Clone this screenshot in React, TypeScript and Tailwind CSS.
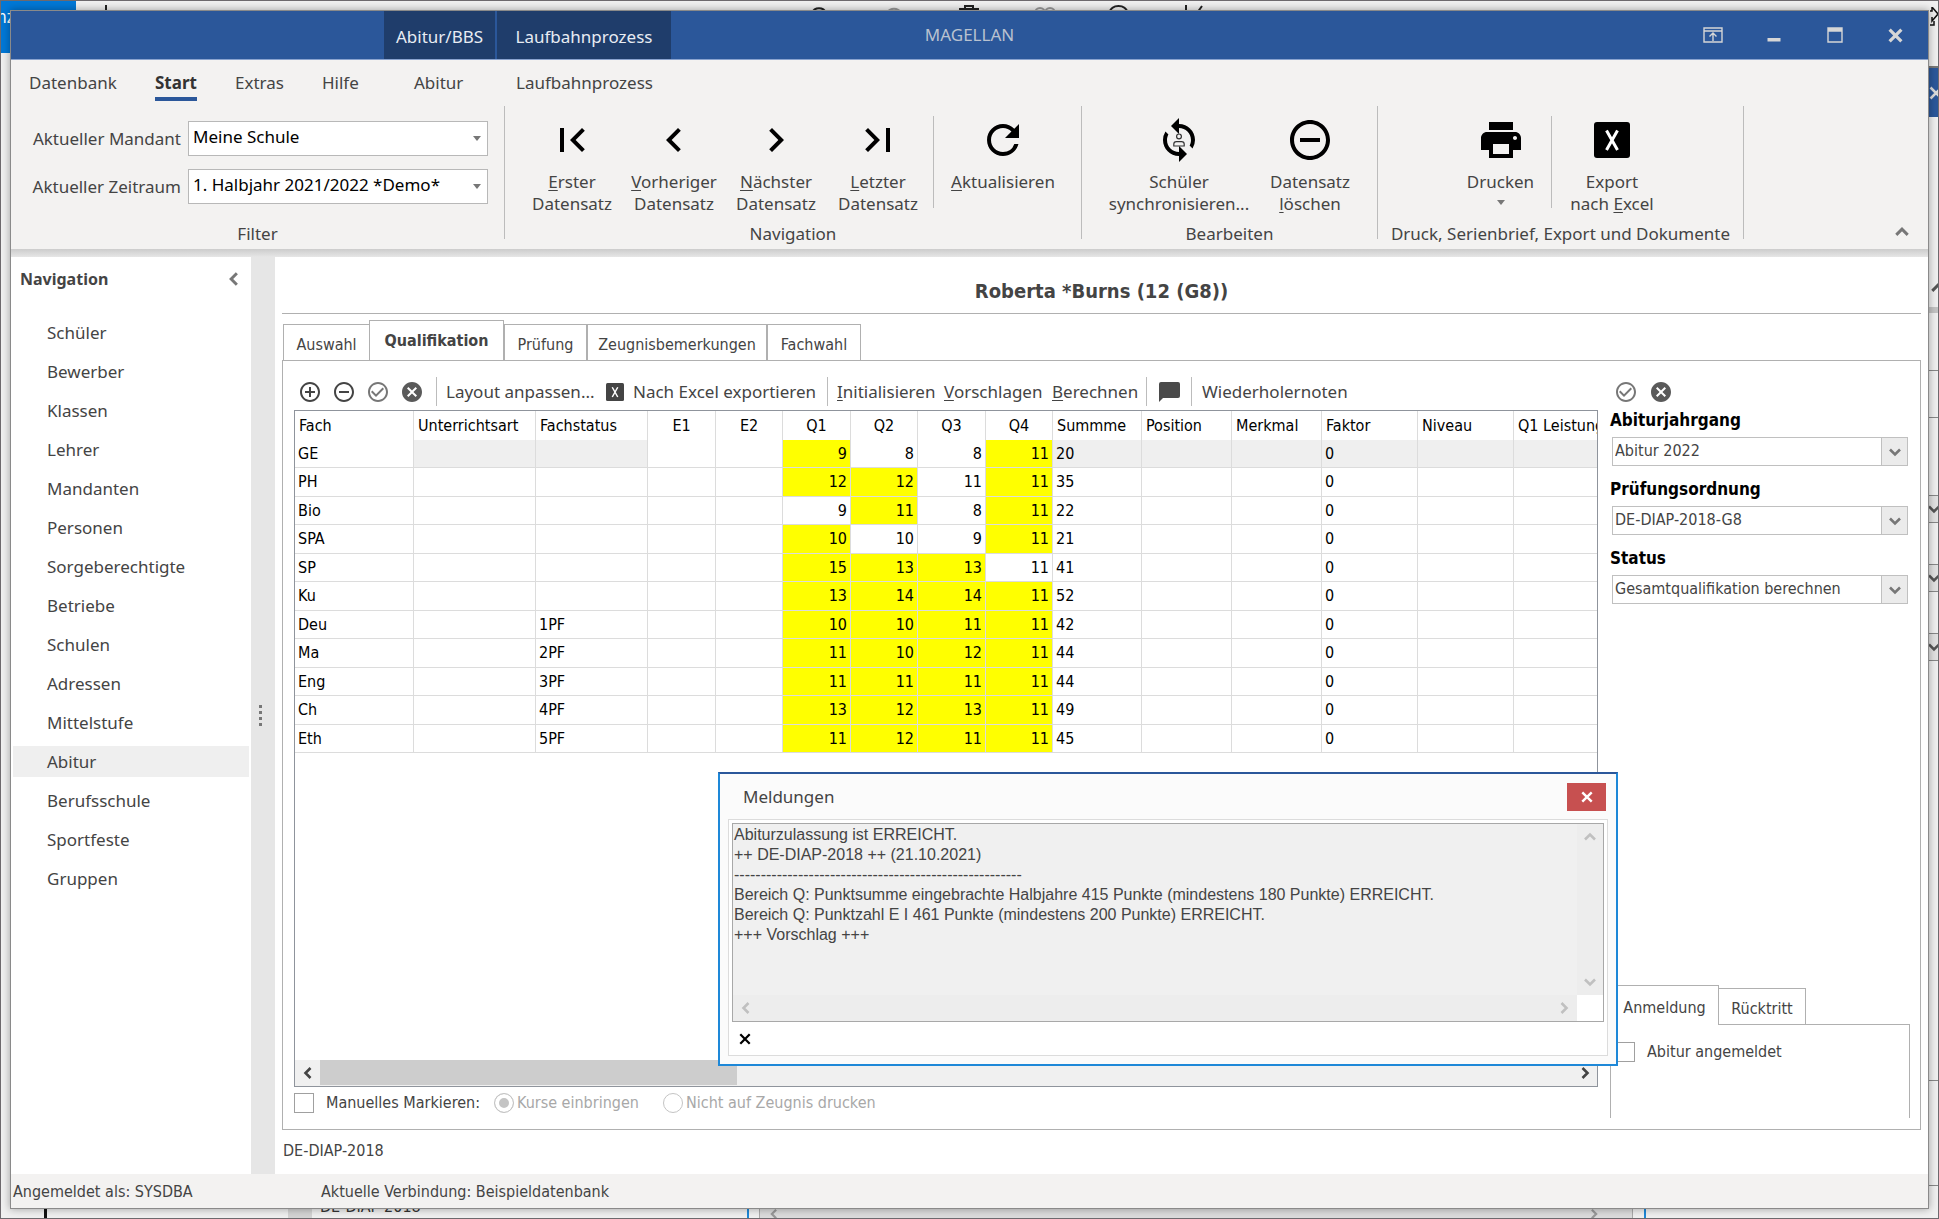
import { useState } from 'react';
import type { ReactNode } from 'react';
import {
  MdAddCircleOutline,
  MdCancel,
  MdCheckCircleOutline,
  MdChevronLeft,
  MdChevronRight,
  MdFirstPage,
  MdLastPage,
  MdPrint,
  MdRefresh,
  MdRemoveCircleOutline,
  MdSync,
} from 'react-icons/md';

type GradeRow = {
  subject: string;
  status: string;
  grades: number[];
  marked: boolean[];
  sum: number;
};

const navItems = [
  'Schüler', 'Bewerber', 'Klassen', 'Lehrer', 'Mandanten', 'Personen', 'Sorgeberechtigte', 'Betriebe',
  'Schulen', 'Adressen', 'Mittelstufe', 'Abitur', 'Berufsschule', 'Sportfeste', 'Gruppen',
];

const menuItems = [
  { label: 'Datenbank', width: 'w-[126px]' },
  { label: 'Start', width: 'w-[80px]' },
  { label: 'Extras', width: 'w-[87px]' },
  { label: 'Hilfe', width: 'w-[92px]' },
  { label: 'Abitur', width: 'w-[102px]' },
  { label: 'Laufbahnprozess', width: 'w-[150px]' },
];

const pageTabs = [
  { label: 'Auswahl', width: 'w-[86px]' },
  { label: 'Qualifikation', width: 'w-[135px]' },
  { label: 'Prüfung', width: 'w-[83px]' },
  { label: 'Zeugnisbemerkungen', width: 'w-[180px]' },
  { label: 'Fachwahl', width: 'w-[94px]' },
];

const columns = [
  { label: 'Fach', width: 'w-[119px]' },
  { label: 'Unterrichtsart', width: 'w-[122px]' },
  { label: 'Fachstatus', width: 'w-[112px]' },
  { label: 'E1', width: 'w-[68px]', center: true },
  { label: 'E2', width: 'w-[67px]', center: true },
  { label: 'Q1', width: 'w-[68px]', center: true },
  { label: 'Q2', width: 'w-[67px]', center: true },
  { label: 'Q3', width: 'w-[68px]', center: true },
  { label: 'Q4', width: 'w-[67px]', center: true },
  { label: 'Summme', width: 'w-[89px]' },
  { label: 'Position', width: 'w-[90px]' },
  { label: 'Merkmal', width: 'w-[90px]' },
  { label: 'Faktor', width: 'w-[96px]' },
  { label: 'Niveau', width: 'w-[96px]' },
  { label: 'Q1 Leistung', width: '' },
];

const gradeRows: GradeRow[] = [
  { subject: 'GE', status: '', grades: [9, 8, 8, 11], marked: [true, false, false, true], sum: 20 },
  { subject: 'PH', status: '', grades: [12, 12, 11, 11], marked: [true, true, false, true], sum: 35 },
  { subject: 'Bio', status: '', grades: [9, 11, 8, 11], marked: [false, true, false, true], sum: 22 },
  { subject: 'SPA', status: '', grades: [10, 10, 9, 11], marked: [true, false, false, true], sum: 21 },
  { subject: 'SP', status: '', grades: [15, 13, 13, 11], marked: [true, true, true, false], sum: 41 },
  { subject: 'Ku', status: '', grades: [13, 14, 14, 11], marked: [true, true, true, true], sum: 52 },
  { subject: 'Deu', status: '1PF', grades: [10, 10, 11, 11], marked: [true, true, true, true], sum: 42 },
  { subject: 'Ma', status: '2PF', grades: [11, 10, 12, 11], marked: [true, true, true, true], sum: 44 },
  { subject: 'Eng', status: '3PF', grades: [11, 11, 11, 11], marked: [true, true, true, true], sum: 44 },
  { subject: 'Ch', status: '4PF', grades: [13, 12, 13, 11], marked: [true, true, true, true], sum: 49 },
  { subject: 'Eth', status: '5PF', grades: [11, 12, 11, 11], marked: [true, true, true, true], sum: 45 },
];

const messages = `Abiturzulassung ist ERREICHT.
++ DE-DIAP-2018 ++ (21.10.2021)
------------------------------------------------------
Bereich Q: Punktsumme eingebrachte Halbjahre 415 Punkte (mindestens 180 Punkte) ERREICHT.
Bereich Q: Punktzahl E I 461 Punkte (mindestens 200 Punkte) ERREICHT.
+++ Vorschlag +++`;

function ExcelIcon({ className }: { className: string }) {
  return (
    <svg viewBox="0 0 36 36" className={className} aria-hidden="true">
      <rect width="36" height="36" rx="3" fill="currentColor" />
      <path d="M12.5 8.5 L23.5 28 M23.5 8.5 L12.5 28" stroke="white" strokeWidth="3" fill="none" />
    </svg>
  );
}

function Chevron({ dir, className }: { dir: 'up' | 'down' | 'left' | 'right'; className: string }) {
  const paths = {
    up: 'M2 9.5 L7 4.5 L12 9.5',
    down: 'M2 4.5 L7 9.5 L12 4.5',
    left: 'M9.5 2 L4.5 7 L9.5 12',
    right: 'M4.5 2 L9.5 7 L4.5 12',
  };
  return (
    <svg viewBox="0 0 14 14" className={className} fill="none" stroke="currentColor" strokeWidth="2.6" aria-hidden="true">
      <path d={paths[dir]} />
    </svg>
  );
}

function Caret({ className }: { className: string }) {
  return (
    <svg viewBox="0 0 8 5" className={className} fill="currentColor" aria-hidden="true">
      <path d="M0 0 H8 L4 5 Z" />
    </svg>
  );
}

function Cross({ className, width }: { className: string; width: number }) {
  return (
    <svg viewBox="0 0 14 14" className={className} fill="none" stroke="currentColor" strokeWidth={width} aria-hidden="true">
      <path d="M1.5 1.5 L12.5 12.5 M12.5 1.5 L1.5 12.5" />
    </svg>
  );
}

function ChatIcon() {
  return (
    <svg viewBox="0 0 21 20" className="h-5 w-[21px]" fill="#4a4a4a" aria-hidden="true">
      <path d="M2 0 H19 A2 2 0 0 1 21 2 V14 A2 2 0 0 1 19 16 H4 L0 20 V2 A2 2 0 0 1 2 0 Z" />
    </svg>
  );
}

// sync arrows with the little person in the middle
function SyncPersonIcon() {
  return (
    <span className="relative flex size-12 items-center justify-center">
      <MdSync className="size-12" />
      <svg viewBox="0 0 12 14" className="absolute h-[14px] w-3" fill="none" stroke="#333" strokeWidth="1.2" aria-hidden="true">
        <circle cx="6" cy="3.4" r="2.4" />
        <path d="M0.8 13 V11 Q0.8 8.6 3.4 8.6 H8.6 Q11.2 8.6 11.2 11 V13 Z" />
      </svg>
    </span>
  );
}

// underlines the access key inside a caption
function Hot({ text, at = 0 }: { text: string; at?: number }) {
  return (
    <>
      {text.slice(0, at)}
      <span className="underline decoration-1 underline-offset-2">{text[at]}</span>
      {text.slice(at + 1)}
    </>
  );
}

function RibbonButton({ icon, width, children }: { icon: ReactNode; width: string; children: ReactNode }) {
  return (
    <button className={`flex flex-col items-center gap-[7px] pt-[13px] leading-[22px] ${width}`}>
      <span className="flex size-12 items-center justify-center text-black">{icon}</span>
      <span className="flex flex-col items-center whitespace-nowrap">{children}</span>
    </button>
  );
}

function RibbonGroup({ title, width, padding, children }: { title: string; width: string; padding: string; children: ReactNode }) {
  return (
    <section className={`flex shrink-0 ${width}`}>
      <div className="flex min-w-0 flex-1 flex-col">
        <div className={`flex h-[120px] items-start ${padding}`}>{children}</div>
        <h2 className="text-center leading-[22px] whitespace-nowrap">{title}</h2>
      </div>
      <div className="mt-[3px] h-[133px] w-px bg-[#bcbcbc]" />
    </section>
  );
}

function RibbonDivider({ className = '' }: { className?: string }) {
  return <div className={`mt-[13px] h-[92px] w-px shrink-0 bg-[#bcbcbc] ${className}`} />;
}

function RibbonSelect({ id, label, value }: { id: string; label: string; value: string }) {
  return (
    <>
      <label htmlFor={id} className="text-right whitespace-nowrap">{label}</label>
      <div className="flex h-[35px] items-center border border-[#b8b8b8] bg-white pr-1.5">
        <select id={id} className="h-full min-w-0 flex-1 appearance-none bg-white pb-1 pl-1 text-black outline-none">
          <option>{value}</option>
        </select>
        <Caret className="pointer-events-none h-[5px] w-2 text-[#777]" />
      </div>
    </>
  );
}

function FieldSelect({ id, label, value }: { id: string; label: string; value: string }) {
  return (
    <div className="mb-[13px]">
      <label htmlFor={id} className="block h-[27px] text-[17px] leading-5 font-bold text-black">{label}</label>
      <div className="mx-0.5 flex h-[29px] border border-[#c0c0c0]">
        <select id={id} className="min-w-0 flex-1 appearance-none bg-white pb-0.5 pl-0.5 outline-none">
          <option>{value}</option>
        </select>
        <span className="pointer-events-none flex w-[26px] items-center justify-center border-l border-[#c0c0c0] bg-[#ebebeb]">
          <Chevron dir="down" className="size-[14px] text-[#777]" />
        </span>
      </div>
    </div>
  );
}

// parts of the windows that lie behind the main one
function Backdrop() {
  return (
    <div className="absolute inset-0 overflow-hidden border border-[#6e6a6e] bg-[#f0f0f0]" aria-hidden="true">
      <div className="absolute top-0 left-0 h-[52px] w-[75px] overflow-hidden bg-[#0078d7] text-[17px] text-white">
        <span className="absolute top-[6px] -left-1">nz</span>
      </div>
      <svg className="absolute top-0 left-0 h-[12px] w-full" fill="none" stroke="#222" strokeWidth="2">
        <path d="M105 4 V12 M811 12 A7.5 7.5 0 0 1 825 12 M958 8 H978 M964 8 V5 H972 V8 M1108 12 A10 10 0 0 1 1127 12 M1185 4 V12 M1201 5 L1196 12 M1629 12 A4 4 0 0 1 1636 12 M1643 12 A4 4 0 0 1 1650 12" />
        <path d="M886 12 A8 8 0 0 1 900 12 M1034 12 A5 5 0 0 1 1044 12 A5 5 0 0 1 1054 12" stroke="#999" />
      </svg>
      <svg className="absolute top-[6px] right-0 h-5 w-[9px]" fill="none" stroke="#111" strokeWidth="1.5">
        <path d="M1 4 H3 V0 L9 7 L3 14 V10 M1 18 H5 V14" />
      </svg>
      <div className="absolute top-[65px] right-0 flex h-[51px] w-[9px] items-center overflow-hidden border-t-2 border-[#777] bg-[#2b579a] text-[#dcdcdc]">
        <Cross className="size-[14px] shrink-0" width={2.5} />
      </div>
      <Chevron dir="up" className="absolute top-[279px] -right-2 size-4 text-[#555]" />
      <div className="absolute top-[306px] right-0 h-[6px] w-[9px] bg-[#c4c4c4]" />
      <div className="absolute top-[369px] right-0 h-[48px] w-[9px] border-y border-[#888]" />
      {[494, 563, 632].map((top) => (
        <div key={top} style={{ top }} className="absolute right-0 h-7 w-[9px] overflow-hidden border-y border-[#888] bg-[#e2e2e2]">
          <Chevron dir="down" className="mt-1.5 -ml-0.5 size-[14px] text-[#555]" />
        </div>
      ))}
      <div className="absolute right-0 bottom-[32px] h-[106px] w-[9px] border-y border-[#888]" />
      <div className="absolute bottom-0 left-[43px] h-[9px] w-[3px] bg-[#111]" />
      <div className="absolute bottom-0 left-[287px] h-[9px] w-6 bg-[#d4d4d4]" />
      <span className="absolute bottom-[3px] left-[319px] text-base leading-4 text-[#333]">DE-DIAP-2018</span>
      <div className="absolute bottom-0 left-[746px] h-[9px] w-0.5 bg-[#1e88d8]" />
      <div className="absolute right-[305px] bottom-0 left-[758px] flex h-[9px] items-center justify-between border-x border-[#aaa] bg-[#dcdcdc] pr-8 pl-2">
        <Chevron dir="left" className="size-3 text-[#999]" />
        <Chevron dir="right" className="size-3 text-[#999]" />
      </div>
      <div className="absolute right-[292px] bottom-0 h-[9px] w-0.5 bg-[#1e88d8]" />
    </div>
  );
}

function TitleBar() {
  return (
    <header className="grid h-[49px] grid-cols-[1fr_auto_1fr] items-center border-b border-[#8aa3cf] bg-[#2b579a] font-['Noto_Sans',sans-serif] text-[17px]">
      <div className="flex h-full gap-0.5 pl-[373px] text-[#e8ecf3]">
        <div className="flex w-[111px] items-center justify-center bg-[#1f3d6b] pt-1">Abitur/BBS</div>
        <div className="flex w-[174px] items-center justify-center bg-[#1f3d6b] pt-1">Laufbahnprozess</div>
      </div>
      <h1 className="text-[#b9c2d0]">MAGELLAN</h1>
      <div className="flex h-full justify-end pr-0.5 text-[#d6d6d6]">
        <button className="flex w-[61px] items-center justify-center" aria-label="Menüband ausblenden">
          <svg viewBox="0 0 20 16" className="h-4 w-5" fill="none" stroke="currentColor" strokeWidth="1.4">
            <path d="M1 1 H19 V15 H1 Z M1 4 H19 M10 14 V6.5 M6.5 9.5 L10 6 L13.5 9.5" />
          </svg>
        </button>
        <button className="flex w-[61px] items-center justify-center" aria-label="Minimieren">
          <svg viewBox="0 0 14 14" className="size-[14px]" fill="currentColor"><path d="M0.5 10 H13.5 V13.5 H0.5 Z" /></svg>
        </button>
        <button className="flex w-[61px] items-center justify-center" aria-label="Maximieren">
          <svg viewBox="0 0 16 16" className="size-4" fill="none" stroke="currentColor" strokeWidth="1.4"><path d="M1 1 H15 V15 H1 Z M1 2.5 H15 M1 4 H15" /></svg>
        </button>
        <button className="flex w-[61px] items-center justify-center" aria-label="Schließen">
          <Cross className="size-[15px]" width={3} />
        </button>
      </div>
    </header>
  );
}

function Ribbon() {
  return (
    <div className="relative bg-[#f3f2f1] font-['Noto_Sans',sans-serif] text-[17px] text-[#444]">
      <nav className="flex h-[43px] items-start pt-2 pl-[18px]">
        {menuItems.map((item) => (
          <button key={item.label} className={`flex ${item.width}`}>
            <span
              className={`leading-[29px] ${
                item.label === 'Start' ? 'border-b-4 border-[#2b579a] font-bold text-[#333]' : ''
              }`}
            >
              {item.label}
            </span>
          </button>
        ))}
      </nav>
      <div className="flex h-[146px]">
        <RibbonGroup title="Filter" width="w-[494px]" padding="pt-[18px]">
          <div className="grid grid-cols-[170px_300px] items-center gap-x-[7px] gap-y-[13px]">
            <RibbonSelect id="mandant" label="Aktueller Mandant" value="Meine Schule" />
            <RibbonSelect id="zeitraum" label="Aktueller Zeitraum" value="1. Halbjahr 2021/2022 *Demo*" />
          </div>
        </RibbonGroup>
        <RibbonGroup title="Navigation" width="w-[577px]" padding="pl-4">
          <RibbonButton icon={<MdFirstPage className="size-12" />} width="w-[102px]">
            <span><Hot text="Erster" /></span><span>Datensatz</span>
          </RibbonButton>
          <RibbonButton icon={<MdChevronLeft className="size-12" />} width="w-[102px]">
            <span><Hot text="Vorheriger" /></span><span>Datensatz</span>
          </RibbonButton>
          <RibbonButton icon={<MdChevronRight className="size-12" />} width="w-[102px]">
            <span><Hot text="Nächster" /></span><span>Datensatz</span>
          </RibbonButton>
          <RibbonButton icon={<MdLastPage className="size-12" />} width="w-[102px]">
            <span><Hot text="Letzter" /></span><span>Datensatz</span>
          </RibbonButton>
          <RibbonDivider className="ml-1" />
          <RibbonButton icon={<MdRefresh className="size-12" />} width="w-[138px]">
            <span><Hot text="Aktualisieren" /></span>
          </RibbonButton>
        </RibbonGroup>
        <RibbonGroup title="Bearbeiten" width="w-[296px]" padding="pl-7">
          <RibbonButton icon={<SyncPersonIcon />} width="w-[138px]">
            <span>Schüler</span><span>synchronisieren...</span>
          </RibbonButton>
          <RibbonButton icon={<MdRemoveCircleOutline className="size-12" />} width="w-[124px]">
            <span>Datensatz</span><span><Hot text="löschen" /></span>
          </RibbonButton>
        </RibbonGroup>
        <RibbonGroup title="Druck, Serienbrief, Export und Dokumente" width="w-[366px]" padding="pl-[72px]">
          <RibbonButton icon={<MdPrint className="size-12" />} width="w-[101px]">
            <span>Drucken</span>
            <Caret className="mt-[7px] h-[5px] w-2 text-[#777]" />
          </RibbonButton>
          <RibbonDivider />
          <RibbonButton icon={<ExcelIcon className="size-9" />} width="w-[120px]">
            <span>Export</span><span><Hot text="nach Excel" at={5} /></span>
          </RibbonButton>
        </RibbonGroup>
        <button className="mt-auto mr-[18px] mb-[9px] ml-auto" aria-label="Menüband reduzieren">
          <Chevron dir="up" className="size-4 text-[#777]" />
        </button>
      </div>
      <div className="h-2 bg-gradient-to-b from-[#cccccc] to-[#e6e6e6]" />
    </div>
  );
}

function Sidebar() {
  const [active, setActive] = useState('Abitur');
  return (
    <nav className="w-60 shrink-0 bg-white font-['Noto_Sans',sans-serif] text-[17px] text-[#444]">
      <div className="flex h-11 items-center justify-between px-[9px] text-[16px] font-bold">
        Navigation
        <button aria-label="Navigation einklappen">
          <Chevron dir="left" className="size-4 text-[#777]" />
        </button>
      </div>
      <ul className="pt-3">
        {navItems.map((item) => (
          <li key={item} className="px-0.5 py-1">
            <button
              onClick={() => setActive(item)}
              className={`block h-[31px] w-full pl-[34px] text-left leading-[31px] ${item === active ? 'bg-[#efefef]' : ''}`}
            >
              {item}
            </button>
          </li>
        ))}
      </ul>
    </nav>
  );
}

function Toolbar() {
  return (
    <div className="flex h-[49px] shrink-0 items-center pt-4 pb-1 font-['Noto_Sans',sans-serif] text-[17px] whitespace-nowrap text-[#444]">
      <div className="flex gap-[10px] pl-1">
        <button aria-label="Hinzufügen"><MdAddCircleOutline className="size-6" /></button>
        <button aria-label="Entfernen"><MdRemoveCircleOutline className="size-6" /></button>
        <button aria-label="Übernehmen"><MdCheckCircleOutline className="size-6 text-[#777]" /></button>
        <button aria-label="Verwerfen"><MdCancel className="size-6 text-[#5a5a5a]" /></button>
      </div>
      <div className="ml-3 h-[29px] w-px bg-[#bcbcbc]" />
      <button className="w-[157px] pl-[9px] text-left">Layout anpassen...</button>
      <button className="flex w-[233px] items-center gap-[9px] pl-3">
        <ExcelIcon className="size-[18px]" />
        Nach Excel exportieren
      </button>
      <div className="h-[29px] w-px bg-[#bcbcbc]" />
      <button className="w-[107px] pl-[9px] text-left"><Hot text="Initialisieren" /></button>
      <button className="w-[108px] pl-[9px] text-left"><Hot text="Vorschlagen" /></button>
      <button className="w-[103px] pl-[9px] text-left"><Hot text="Berechnen" /></button>
      <div className="h-[29px] w-px bg-[#bcbcbc]" />
      <button className="flex w-11 justify-center" aria-label="Meldungen anzeigen"><ChatIcon /></button>
      <div className="h-[29px] w-px bg-[#bcbcbc]" />
      <button className="pl-[10px]">Wiederholernoten</button>
    </div>
  );
}

function GradeTable() {
  const cell = 'border-r border-b border-[#dcdcdc] p-0 pl-[3px]';
  return (
    <table className="w-full table-fixed border-separate border-spacing-0 text-left text-black">
      <thead>
        <tr className="h-[29px]">
          {columns.map((col) => (
            <th
              key={col.label}
              className={`overflow-hidden border-r border-[#dcdcdc] p-0 font-normal whitespace-nowrap last:border-r-0 ${col.width} ${
                col.center ? 'text-center' : 'pl-1'
              }`}
            >
              {col.label}
            </th>
          ))}
        </tr>
      </thead>
      <tbody>
        {gradeRows.map((row, i) => {
          const shade = i === 0 ? 'bg-[#efefef]' : '';
          return (
            <tr key={row.subject} className="odd:h-7 even:h-[29px]">
              <td className={cell}>{row.subject}</td>
              <td className={`${cell} ${shade}`} />
              <td className={`${cell} ${shade}`}>{row.status}</td>
              <td className={cell} />
              <td className={cell} />
              {row.grades.map((grade, q) => (
                <td
                  key={q}
                  className={`border-r border-b border-[#dcdcdc] p-0 pr-[3px] text-right ${row.marked[q] ? 'bg-[#ffff00]' : ''}`}
                >
                  {grade}
                </td>
              ))}
              <td className={`${cell} ${shade}`}>{row.sum}</td>
              <td className={`${cell} ${shade}`} />
              <td className={`${cell} ${shade}`} />
              <td className={`${cell} ${shade}`}>0</td>
              <td className={`${cell} ${shade}`} />
              <td className={`border-b border-[#dcdcdc] ${shade}`} />
            </tr>
          );
        })}
      </tbody>
    </table>
  );
}

function DetailPanel() {
  return (
    <aside className="flex w-[322px] shrink-0 flex-col pr-[10px] pb-[11px] pl-3">
      <div className="flex h-[49px] items-center gap-[11px] pt-4 pb-1 pl-1">
        <button aria-label="Übernehmen"><MdCheckCircleOutline className="size-6 text-[#777]" /></button>
        <button aria-label="Verwerfen"><MdCancel className="size-6 text-[#5a5a5a]" /></button>
      </div>
      <FieldSelect id="jahrgang" label="Abiturjahrgang" value="Abitur 2022" />
      <FieldSelect id="ordnung" label="Prüfungsordnung" value="DE-DIAP-2018-G8" />
      <FieldSelect id="status" label="Status" value="Gesamtqualifikation berechnen" />
      <div className="mt-auto">
        <div className="flex items-end">
          <button className="-mb-px h-10 w-[109px] border border-b-0 border-[#b0b0b0] bg-white pt-1">Anmeldung</button>
          <button className="h-9 w-[87px] border border-b-0 border-l-0 border-[#b0b0b0] pt-1">Rücktritt</button>
        </div>
        <div className="h-[94px] border border-b-0 border-[#b0b0b0] pt-[17px] pl-1">
          <label className="flex items-center gap-3">
            <input type="checkbox" className="size-5 appearance-none border border-[#a0a0a0] bg-white" />
            Abitur angemeldet
          </label>
        </div>
      </div>
    </aside>
  );
}

function MessageDialog({ onClose }: { onClose: () => void }) {
  return (
    <div
      role="dialog"
      aria-label="Meldungen"
      className="absolute top-[761px] left-[707px] flex h-[294px] w-[900px] flex-col border-2 border-[#1e88d8] border-t-[#2b579a] bg-[#fbfbfb] px-2 pb-2"
    >
      <div className="flex h-[45px] items-center justify-between pr-0.5 pl-[15px] font-['Noto_Sans',sans-serif] text-[17px] text-[#444]">
        Meldungen
        <button onClick={onClose} aria-label="Schließen" className="flex h-7 w-[39px] items-center justify-center bg-[#c75050] text-white">
          <Cross className="size-[12px]" width={2.8} />
        </button>
      </div>
      <div className="flex flex-1 flex-col border border-[#dcdcdc] bg-white p-[3px]">
        <div className="grid h-[199px] grid-cols-[1fr_26px] grid-rows-[1fr_26px] border border-[#a8a8a8]">
          <textarea
            readOnly
            aria-label="Meldungstext"
            value={messages}
            className="resize-none overflow-hidden bg-[#f0f0f0] pt-px pl-px font-['Liberation_Sans',sans-serif] text-[16px] leading-5 text-[#444] outline-none"
          />
          <div className="flex flex-col items-center justify-between bg-[#ededed] py-1.5 text-[#c0c0c0]">
            <Chevron dir="up" className="size-[14px]" />
            <Chevron dir="down" className="size-[14px]" />
          </div>
          <div className="flex items-center justify-between bg-[#ededed] px-1.5 text-[#c0c0c0]">
            <Chevron dir="left" className="size-[14px]" />
            <Chevron dir="right" className="size-[14px]" />
          </div>
        </div>
        <button onClick={onClose} aria-label="Meldungen schließen" className="mt-[11px] ml-[7px] size-3 text-black">
          <Cross className="size-3" width={2.6} />
        </button>
      </div>
    </div>
  );
}

export default function App() {
  const [dialogOpen, setDialogOpen] = useState(true);
  return (
    <div className="relative flex min-h-screen flex-col p-[10px] font-['DejaVu_Sans_Condensed','DejaVu_Sans',sans-serif] text-[16px] leading-5 text-[#444]">
      <Backdrop />
      <div className="relative flex flex-1 flex-col border border-[#8a8a8a] bg-white shadow-[0_0_8px_rgba(0,0,0,0.35)]">
        <TitleBar />
        <Ribbon />
        <div className="flex flex-1">
          <Sidebar />
          <div className="flex w-6 shrink-0 flex-col justify-center gap-[3px] bg-[#e6e6e6] pl-2">
            {[0, 1, 2, 3].map((dot) => (
              <span key={dot} className="size-[3px] bg-[#777]" />
            ))}
          </div>
          <main className="flex min-w-0 flex-1 flex-col px-[7px]">
            <h2 className="h-14 pt-[11px] text-center text-[20px] leading-[46px] font-bold">Roberta *Burns (12 (G8))</h2>
            <div className="h-px bg-[#b0b0b0]" />
            <div className="flex h-[46px] items-end pl-px">
              {pageTabs.map((tab) => (
                <button
                  key={tab.label}
                  className={`${tab.width} ${
                    tab.label === 'Qualifikation'
                      ? '-mb-px h-[41px] border border-b-0 border-[#b0b0b0] bg-white pb-px font-bold'
                      : 'h-9 border border-b-0 border-[#b0b0b0] pt-1 first:border-r-0'
                  }`}
                >
                  {tab.label}
                </button>
              ))}
            </div>
            <div className="flex flex-1 border border-[#b0b0b0]">
              <div className="flex min-w-0 flex-1 flex-col pl-[11px]">
                <Toolbar />
                <div className="flex flex-1 flex-col overflow-hidden border border-[#8f949c]">
                  <GradeTable />
                  <div className="mt-auto flex h-[26px] items-center bg-[#f0f0f0] pb-px text-[#444]">
                    <button className="flex w-[25px] justify-center" aria-label="Nach links"><Chevron dir="left" className="size-[14px]" /></button>
                    <div className="h-full flex-1"><div className="h-full w-1/3 bg-[#cdcdcd]" /></div>
                    <button className="flex w-[25px] justify-center" aria-label="Nach rechts"><Chevron dir="right" className="size-[14px]" /></button>
                  </div>
                </div>
                <div className="flex h-[42px] items-start pt-[6px]">
                  <label className="flex w-[200px] items-center gap-3">
                    <input type="checkbox" className="size-5 appearance-none border border-[#a0a0a0]" />
                    Manuelles Markieren:
                  </label>
                  <label className="flex w-[169px] items-center gap-[3px] text-[#a8a8a8]">
                    <input type="radio" name="marker" disabled defaultChecked className="size-5 appearance-none rounded-full border border-[#c4c4c4] bg-[#c4c4c4] shadow-[inset_0_0_0_4px_white]" />
                    Kurse einbringen
                  </label>
                  <label className="flex items-center gap-[3px] text-[#a8a8a8]">
                    <input type="radio" name="marker" disabled className="size-5 appearance-none rounded-full border border-[#c4c4c4]" />
                    Nicht auf Zeugnis drucken
                  </label>
                </div>
              </div>
              <DetailPanel />
            </div>
            <div className="h-[44px] pt-[11px] pl-px">DE-DIAP-2018</div>
          </main>
        </div>
        <footer className="flex h-[34px] items-center bg-[#f3f2f1] pt-0.5 pl-0.5">
          <span className="w-[308px]">Angemeldet als: SYSDBA</span>
          <span>Aktuelle Verbindung: Beispieldatenbank</span>
        </footer>
        {dialogOpen && <MessageDialog onClose={() => setDialogOpen(false)} />}
      </div>
    </div>
  );
}
